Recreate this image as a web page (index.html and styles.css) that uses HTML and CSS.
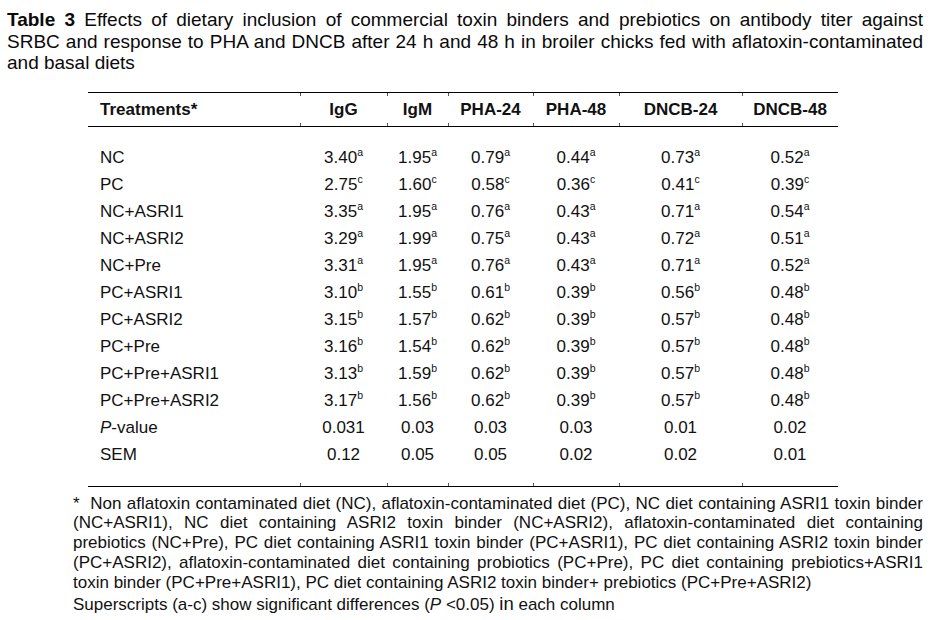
FILE: index.html
```html
<!DOCTYPE html>
<html lang="en">
<head>
<meta charset="utf-8">
<title>Table 3</title>
<link rel="stylesheet" href="styles.css">
</head>
<body>
<div class="page">
  <p class="caption">
    <span class="jl"><b>Table 3</b> Effects of dietary inclusion of commercial toxin binders and prebiotics on antibody titer against</span>
    <span class="jl">SRBC and response to PHA and DNCB after 24 h and 48 h in broiler chicks fed with aflatoxin-contaminated</span>
    <span class="ll">and basal diets</span>
  </p>

  <table class="data">
    <colgroup>
      <col class="c-treat">
      <col class="c-igg">
      <col class="c-igm">
      <col class="c-pha24">
      <col class="c-pha48">
      <col class="c-dn24">
      <col class="c-dn48">
    </colgroup>
    <thead>
      <tr>
        <th class="lbl">Treatments*</th>
        <th>IgG</th>
        <th>IgM</th>
        <th>PHA-24</th>
        <th>PHA-48</th>
        <th>DNCB-24</th>
        <th>DNCB-48</th>
      </tr>
    </thead>
    <tbody>
      <tr class="gap"><td></td><td></td><td></td><td></td><td></td><td></td><td></td></tr>
      <tr><td class="lbl">NC</td><td>3.40<sup>a</sup></td><td>1.95<sup>a</sup></td><td>0.79<sup>a</sup></td><td>0.44<sup>a</sup></td><td>0.73<sup>a</sup></td><td>0.52<sup>a</sup></td></tr>
      <tr><td class="lbl">PC</td><td>2.75<sup>c</sup></td><td>1.60<sup>c</sup></td><td>0.58<sup>c</sup></td><td>0.36<sup>c</sup></td><td>0.41<sup>c</sup></td><td>0.39<sup>c</sup></td></tr>
      <tr><td class="lbl">NC+ASRI1</td><td>3.35<sup>a</sup></td><td>1.95<sup>a</sup></td><td>0.76<sup>a</sup></td><td>0.43<sup>a</sup></td><td>0.71<sup>a</sup></td><td>0.54<sup>a</sup></td></tr>
      <tr><td class="lbl">NC+ASRI2</td><td>3.29<sup>a</sup></td><td>1.99<sup>a</sup></td><td>0.75<sup>a</sup></td><td>0.43<sup>a</sup></td><td>0.72<sup>a</sup></td><td>0.51<sup>a</sup></td></tr>
      <tr><td class="lbl">NC+Pre</td><td>3.31<sup>a</sup></td><td>1.95<sup>a</sup></td><td>0.76<sup>a</sup></td><td>0.43<sup>a</sup></td><td>0.71<sup>a</sup></td><td>0.52<sup>a</sup></td></tr>
      <tr><td class="lbl">PC+ASRI1</td><td>3.10<sup>b</sup></td><td>1.55<sup>b</sup></td><td>0.61<sup>b</sup></td><td>0.39<sup>b</sup></td><td>0.56<sup>b</sup></td><td>0.48<sup>b</sup></td></tr>
      <tr><td class="lbl">PC+ASRI2</td><td>3.15<sup>b</sup></td><td>1.57<sup>b</sup></td><td>0.62<sup>b</sup></td><td>0.39<sup>b</sup></td><td>0.57<sup>b</sup></td><td>0.48<sup>b</sup></td></tr>
      <tr><td class="lbl">PC+Pre</td><td>3.16<sup>b</sup></td><td>1.54<sup>b</sup></td><td>0.62<sup>b</sup></td><td>0.39<sup>b</sup></td><td>0.57<sup>b</sup></td><td>0.48<sup>b</sup></td></tr>
      <tr><td class="lbl">PC+Pre+ASRI1</td><td>3.13<sup>b</sup></td><td>1.59<sup>b</sup></td><td>0.62<sup>b</sup></td><td>0.39<sup>b</sup></td><td>0.57<sup>b</sup></td><td>0.48<sup>b</sup></td></tr>
      <tr><td class="lbl">PC+Pre+ASRI2</td><td>3.17<sup>b</sup></td><td>1.56<sup>b</sup></td><td>0.62<sup>b</sup></td><td>0.39<sup>b</sup></td><td>0.57<sup>b</sup></td><td>0.48<sup>b</sup></td></tr>
      <tr><td class="lbl"><i>P</i>-value</td><td>0.031</td><td>0.03</td><td>0.03</td><td>0.03</td><td>0.01</td><td>0.02</td></tr>
      <tr><td class="lbl">SEM</td><td>0.12</td><td>0.05</td><td>0.05</td><td>0.02</td><td>0.02</td><td>0.01</td></tr>
      <tr class="gap end"><td></td><td></td><td></td><td></td><td></td><td></td><td></td></tr>
    </tbody>
  </table>

  <div class="notes">
    <p class="note">
      <span class="jl">*&nbsp; Non aflatoxin contaminated diet (NC), aflatoxin-contaminated diet (PC), NC diet containing ASRI1 toxin binder</span>
      <span class="jl">(NC+ASRI1), NC diet containing ASRI2 toxin binder (NC+ASRI2), aflatoxin-contaminated diet containing</span>
      <span class="jl">prebiotics (NC+Pre), PC diet containing ASRI1 toxin binder (PC+ASRI1), PC diet containing ASRI2 toxin binder</span>
      <span class="jl">(PC+ASRI2), aflatoxin-contaminated diet containing probiotics (PC+Pre), PC diet containing prebiotics+ASRI1</span>
      <span class="ll">toxin binder (PC+Pre+ASRI1), PC diet containing ASRI2 toxin binder+ prebiotics (PC+Pre+ASRI2)</span>
    </p>
    <p class="note sig">Superscripts (a-c) show significant differences (<i>P</i> &lt;0.05) <span class="big">in</span> each column</p>
  </div>
</div>
</body>
</html>
```

FILE: styles.css
```css
html, body {
  margin: 0;
  padding: 0;
  background: #ffffff;
}

body {
  font-family: "Liberation Sans", Arial, sans-serif;
  color: #111111;
}

.page {
  padding: 9px 17px 0 7px;
}

.caption {
  margin: 0;
  font-size: 19px;
  line-height: 21.5px;
  color: #0a0a0a;
}

.jl {
  display: block;
  text-align: justify;
  text-align-last: justify;
}

.ll {
  display: block;
  text-align: left;
}

.data {
  margin: 18.5px 0 0 81px;
  width: 750px;
  table-layout: fixed;
  border-collapse: separate;
  border-spacing: 0;
  font-size: 17px;
}

.c-treat { width: 212px; }
.c-igg { width: 87px; }
.c-igm { width: 61px; }
.c-pha24 { width: 85px; }
.c-pha48 { width: 86px; }
.c-dn24 { width: 123px; }
.c-dn48 { width: 96px; }

.data th {
  position: relative;
  padding: 0;
  line-height: 33px;
  font-weight: bold;
  text-align: center;
  border-top: 1px solid #000;
  border-bottom: 1px solid #000;
  white-space: nowrap;
}

.data th + th::before,
.data th + th::after,
.gap.end td + td::after {
  content: "";
  position: absolute;
  left: 0;
  width: 1px;
  height: 3px;
  background: #555;
}

.data th + th::before { top: 0; }
.data th + th::after { bottom: 0; }

.data td {
  position: relative;
  padding: 0;
  height: 27px;
  line-height: 27px;
  text-align: center;
  white-space: nowrap;
}

.data .lbl {
  text-align: left;
  padding-left: 12px;
}

.gap td {
  height: 17px;
  line-height: 17px;
}

.gap.end td {
  height: 18px;
  border-bottom: 1px solid #000;
}

.gap.end td + td::after { bottom: 0; }

.data sup {
  font-size: 10.5px;
  line-height: 0;
  vertical-align: 7px;
}

.notes {
  margin: 6.5px 0 0 66px;
}

.note {
  margin: 0;
  font-size: 17px;
  line-height: 19.8px;
}

.sig {
  margin-top: 2px;
}

.big {
  font-size: 18.5px;
}
```
